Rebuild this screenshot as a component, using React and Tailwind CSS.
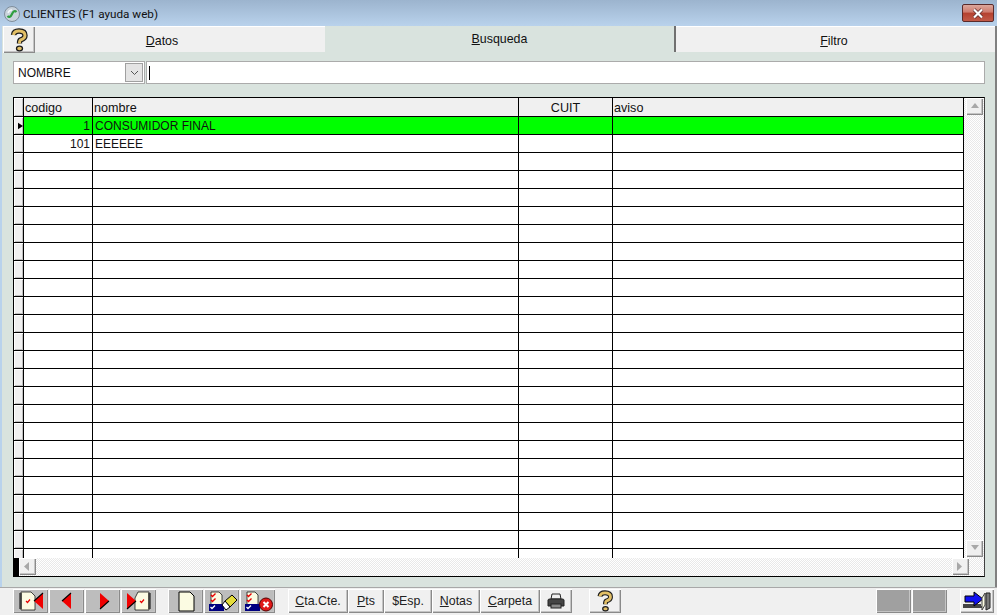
const rows = Array.from({ length: 23 });
const bevel = "shadow-[inset_1px_1px_0_#ffffff,inset_-1px_-1px_0_#8a8a8a,inset_-2px_-2px_0_#c4c4c4]";
const softBevel = "shadow-[inset_1px_1px_0_#ffffff,inset_-1px_-1px_0_#c0c0c0]";
const hatch = "bg-[repeating-conic-gradient(#ffffff_0_25%,#e9e9e9_0_50%)] bg-[length:2px_2px]";
const font = { fontFamily: '"Liberation Sans", Arial, sans-serif' };

function Help({ size = 24 }) {
  const q = "M6.5 7 Q7 3 12 3 Q18 3 18 7.5 Q18 10.5 13.5 12 Q12.5 12.5 12.5 15.5";
  return (
    <svg width={size} height={size} viewBox="0 0 24 24">
      <path d={q} fill="none" stroke="#1c1c1c" strokeWidth="5.4" />
      <path d={q} fill="none" stroke="#e2bf66" strokeWidth="3" />
      <ellipse cx="12.5" cy="20.5" rx="3" ry="2.3" fill="#e2bf66" stroke="#1c1c1c" strokeWidth="1.3" />
    </svg>
  );
}

function Spiral({ x }) {
  return (
    <path
      d={`M${x} 4h3M${x} 6h3M${x} 8h3M${x} 10h3M${x} 12h3M${x} 14h3M${x} 16h3M${x} 18h3`}
      stroke="#000"
      strokeWidth="1"
    />
  );
}

function Arrow({ left, x }) {
  const d = left ? `M${x} 11L${x + 9} 3V19Z` : `M${x + 9} 11L${x} 3V19Z`;
  return (
    <>
      <path d={d} fill="#f00000" />
      <path d={left ? `M${x} 11L${x + 9} 3` : `M${x + 9} 11L${x} 19`} stroke="#000" strokeWidth="1.2" />
    </>
  );
}

// hoja de la agenda con tilde roja
function Sheet({ x, flip }) {
  const d = flip ? `M${x + 3} 2H${x + 14}V20H${x}V8Z` : `M${x} 2H${x + 10}L${x + 14} 6V20H${x}Z`;
  return (
    <>
      <path d={d} fill="#fbfbe2" stroke="#000" strokeWidth="0.7" />
      <path d={`M${x + 5} 11l1.5 1.5 2.5-3`} fill="none" stroke="#e80000" strokeWidth="1.2" />
    </>
  );
}

function List() {
  return (
    <>
      <path d="M3 2H11L14 5V20H3Z" fill="#fbfbe2" stroke="#000" strokeWidth="0.7" />
      <path d="M3 5l1.5 1.5L7.5 3.5M3 10l1.5 1.5L7.5 8.5" fill="none" stroke="#e80000" strokeWidth="1.4" />
      <rect x="1" y="14" width="15" height="7" fill="#000080" />
      <path d="M2.5 17l1.5 1.5L7 15.5" fill="none" stroke="#fff" strokeWidth="1.3" />
    </>
  );
}

function ToolIcon({ name }) {
  return (
    <svg width="34" height="22" viewBox="0 0 34 22">
      {name === "first" && (
        <>
          <Sheet x={7} />
          <Spiral x={5} />
          <Arrow left x={20} />
        </>
      )}
      {name === "prev" && <Arrow left x={12} />}
      {name === "next" && <Arrow x={14} />}
      {name === "last" && (
        <>
          <Sheet x={13} flip />
          <Spiral x={26} />
          <Arrow x={5} />
        </>
      )}
      {name === "new" && <path d="M10 2H21L25 6V21H10Z" fill="#fbfbe2" stroke="#000" />}
      {name === "edit" && (
        <g transform="translate(3 0)">
          <List />
          <path d="M17 11L24 5L29 10L22 17Z" fill="#e4dc3c" stroke="#000" />
          <path d="M14 15L17 11L22 17L18 20Z" fill="#fff" stroke="#000" />
        </g>
      )}
      {name === "del" && (
        <g transform="translate(3 0)">
          <List />
          <circle cx="22" cy="14.5" r="6.5" fill="#e01818" stroke="#500" />
          <path d="M19.5 12l5 5M24.5 12l-5 5" stroke="#fff" strokeWidth="2" />
        </g>
      )}
    </svg>
  );
}

function IconButton({ name }) {
  return (
    <div className={`w-[35px] h-full flex items-center justify-center bg-[#bdbdbd] ${bevel}`}>
      <ToolIcon name={name} />
    </div>
  );
}

function TextButton({ w, under, rest }) {
  return (
    <div className={`${w} h-full flex items-center justify-center bg-[#f0f0f0] text-[12.4px] text-[#222] ${bevel}`}>
      <u>{under}</u>
      {rest}
    </div>
  );
}

function Cell({ w, right, center, children, head }) {
  return (
    <div
      className={`${w} shrink-0 h-full border-r border-black overflow-hidden whitespace-nowrap ${right ? "text-right px-[2px]" : "px-px"} ${center ? "text-center" : ""} ${head ? "text-[12.6px] leading-[20px]" : "text-[12px] pl-[2px] leading-[18px]"}`}
    >
      {children}
    </div>
  );
}

function Row({ children, selected, head }) {
  return (
    <div className={`flex ${head ? "h-[19px]" : "h-[18px]"} border-b border-black text-[#111] ${selected ? "bg-[#00ff00]" : head ? "bg-[#f0f0f0]" : "bg-white"}`}>
      <div className={`w-[10px] shrink-0 h-full border-r border-black bg-[#f0f0f0] flex items-center ${softBevel}`}>
        {selected && (
          <svg width="6" height="8" viewBox="0 0 6 8" className="ml-[4px]">
            <path d="M0 0L6 4L0 8Z" fill="#000" />
          </svg>
        )}
      </div>
      {children}
    </div>
  );
}

function ScrollBtn({ dir }) {
  const d = {
    up: "M1 6L5 1L9 6Z",
    down: "M1 1H9L5 6Z",
    left: "M6 0V9L1 4.5Z",
    right: "M1 0V9L6 4.5Z",
  }[dir];
  return (
    <div className={`w-[17px] h-[17px] shrink-0 flex items-center justify-center bg-[#f0f0f0] ${bevel}`}>
      <svg width="10" height="9" viewBox="0 0 10 9">
        <path d={d} fill="#a8a8a8" />
      </svg>
    </div>
  );
}

export default function App() {
  return (
    <div className="w-[997px] h-[615px] overflow-hidden flex flex-col bg-[#d9e3de]" style={font}>
      {/* barra de titulo */}
      <div className="h-[26px] shrink-0 flex items-center bg-gradient-to-b from-[#9cb4ce] to-[#b9d2ec] pl-[3px] pr-[3px]">
        <svg width="18" height="18" viewBox="0 0 18 18" className="mt-px">
          <circle cx="9" cy="9" r="7.5" fill="#c9d3dc" stroke="#7f8d9b" />
          <path d="M4.5 11Q7 13.5 9 9T13.5 7" fill="none" stroke="#2f9e3f" strokeWidth="2.2" />
          <path d="M5 8Q6 5 9 5" fill="none" stroke="#f4f7f9" strokeWidth="1.4" />
        </svg>
        <span className="ml-[2px] mt-[3px] text-[11.7px] text-[#111] font-['Roboto',sans-serif]">CLIENTES (F1 ayuda web)</span>
        <div className="ml-auto w-[32px] h-[18px] rounded-[2px] border border-[#5a2a2a] bg-[linear-gradient(#dba79c_0%,#cf7a6c_45%,#b4402e_50%,#c25a48_100%)] flex items-center justify-center">
          <svg width="14" height="11" viewBox="0 0 14 11">
            <path d="M3 1.5L11 9.5M11 1.5L3 9.5" stroke="#5a2a2a" strokeWidth="3.6" />
            <path d="M3 1.5L11 9.5M11 1.5L3 9.5" stroke="#fff" strokeWidth="2.2" />
          </svg>
        </div>
      </div>

      <div className="flex-1 flex flex-col border-l-2 border-r-2 border-l-[#b9d2ec] border-r-[#808080]">
        {/* pestañas */}
        <div className="h-[27px] shrink-0 flex text-[12.4px] text-[#111]">
          <div className={`w-[32px] ml-px h-full flex items-center justify-center bg-[#f0f0f0] ${bevel}`}>
            <Help />
          </div>
          <div className="w-[290px] h-[26px] flex items-center justify-center bg-[#f0f0f0] border-t border-white pr-[36px] pt-[3px]">
            <span><u>D</u>atos</span>
          </div>
          <div className="w-[351px] h-[26px] flex items-center justify-center border-r-2 border-r-[#707070]">
            <span><u>B</u>usqueda</span>
          </div>
          <div className="flex-1 h-[26px] flex items-center justify-center bg-[#f0f0f0] border-t border-white pr-[3px] pt-[3px]">
            <span><u>F</u>iltro</span>
          </div>
        </div>

        {/* busqueda */}
        <div className="mt-[8px] ml-[11px] mr-[10px] flex h-[23px] shrink-0 gap-[1px]">
          <div className="w-[132px] flex items-center bg-white border border-[#ababab] pl-[4px] pr-px text-[12px] text-[#111]">
            NOMBRE
            <div className="ml-auto w-[18px] h-[19px] bg-[#e4e4e4] border border-[#a0a0a0] flex items-center justify-center">
              <svg width="9" height="6" viewBox="0 0 9 6">
                <path d="M1 1L4.5 4.5L8 1" fill="none" stroke="#555" />
              </svg>
            </div>
          </div>
          <div className="flex-1 bg-white border border-[#ababab] pl-[2px] flex items-center">
            <div className="w-px h-[14px] bg-black" />
          </div>
        </div>

        {/* grilla */}
        <div className="mt-[13px] ml-[11px] mr-[10px] h-[480px] shrink-0 border border-t-black border-l-black border-b-black border-r-[#404040] flex flex-col">
          <div className="flex-1 min-h-0 flex">
            <div className="flex-1 overflow-hidden">
              <Row head>
                <Cell w="w-[69px]" head>codigo</Cell>
                <Cell w="w-[426px]" head>nombre</Cell>
                <Cell w="w-[94px]" center head>CUIT</Cell>
                <Cell w="w-[351px]" head>aviso</Cell>
              </Row>
              <Row selected>
                <Cell w="w-[69px]" right>1</Cell>
                <Cell w="w-[426px]">CONSUMIDOR FINAL</Cell>
                <Cell w="w-[94px]" />
                <Cell w="w-[351px]" />
              </Row>
              <Row>
                <Cell w="w-[69px]" right>101</Cell>
                <Cell w="w-[426px]">EEEEEE</Cell>
                <Cell w="w-[94px]" />
                <Cell w="w-[351px]" />
              </Row>
              {rows.map((_, i) => (
                <Row key={i}>
                  <Cell w="w-[69px]" />
                  <Cell w="w-[426px]" />
                  <Cell w="w-[94px]" />
                  <Cell w="w-[351px]" />
                </Row>
              ))}
            </div>
            <div className={`w-[20px] shrink-0 flex flex-col items-center justify-between pb-px pl-px ${hatch}`}>
              <ScrollBtn dir="up" />
              <ScrollBtn dir="down" />
            </div>
          </div>
          <div className="h-[18px] shrink-0 flex">
            <div className="w-[5px] bg-black" />
            <div className={`flex-1 flex justify-between pr-[15px] ${hatch}`}>
              <ScrollBtn dir="left" />
              <ScrollBtn dir="right" />
            </div>
          </div>
        </div>
      </div>

      {/* barra inferior */}
      <div className="h-[28px] shrink-0 bg-[#f0f0f0] border-t border-[#a8a8a8] pt-px flex">
        <div className="flex h-[24px] ml-[13px] gap-px">
          <IconButton name="first" />
          <IconButton name="prev" />
          <IconButton name="next" />
          <IconButton name="last" />
        </div>
        <div className="flex h-[24px] ml-[12px] gap-px">
          <IconButton name="new" />
          <IconButton name="edit" />
          <IconButton name="del" />
        </div>
        <div className="flex h-[24px] ml-[13px]">
          <TextButton w="w-[60px]" under="C" rest="ta.Cte." />
          <TextButton w="w-[36px]" under="P" rest="ts" />
          <TextButton w="w-[48px]" rest="$Esp." />
          <TextButton w="w-[48px]" under="N" rest="otas" />
          <TextButton w="w-[60px]" under="C" rest="arpeta" />
          <div className={`w-[32px] h-full flex items-center justify-center bg-[#f0f0f0] ${bevel}`}>
            <svg width="18" height="16" viewBox="0 0 18 16">
              <path d="M5 1H13L14 6H4Z" fill="#eee" stroke="#222" />
              <path d="M1 7Q1 6 3 6H15Q17 6 17 7V13H1Z" fill="#444" stroke="#222" />
              <rect x="4" y="11" width="10" height="4" fill="#888" stroke="#222" />
            </svg>
          </div>
        </div>
        <div className={`ml-[17px] w-[32px] h-[24px] flex items-center justify-center bg-[#f0f0f0] ${bevel}`}>
          <Help size={22} />
        </div>
        <div className="ml-[255px] flex h-[24px] gap-px">
          <div className={`w-[35px] h-full bg-[#a0a0a0] ${bevel}`} />
          <div className={`w-[35px] h-full bg-[#a0a0a0] ${bevel}`} />
        </div>
        <div className={`ml-[13px] w-[34px] h-[24px] flex items-center justify-center bg-[#f0f0f0] ${bevel}`}>
          <svg width="32" height="22" viewBox="0 0 32 22">
            <path d="M2 15H20M2 17H22" stroke="#444" strokeWidth="2" />
            <path d="M4 6H13V2L22 9L13 16V12H4Z" fill="#1010f0" stroke="#000" />
            <path d="M21 20L24 15V3L21 8Z" fill="#fbfbe2" stroke="#444" />
            <path d="M25 3H29V18L25 20Z" fill="#777" stroke="#222" />
          </svg>
        </div>
      </div>
    </div>
  );
}
